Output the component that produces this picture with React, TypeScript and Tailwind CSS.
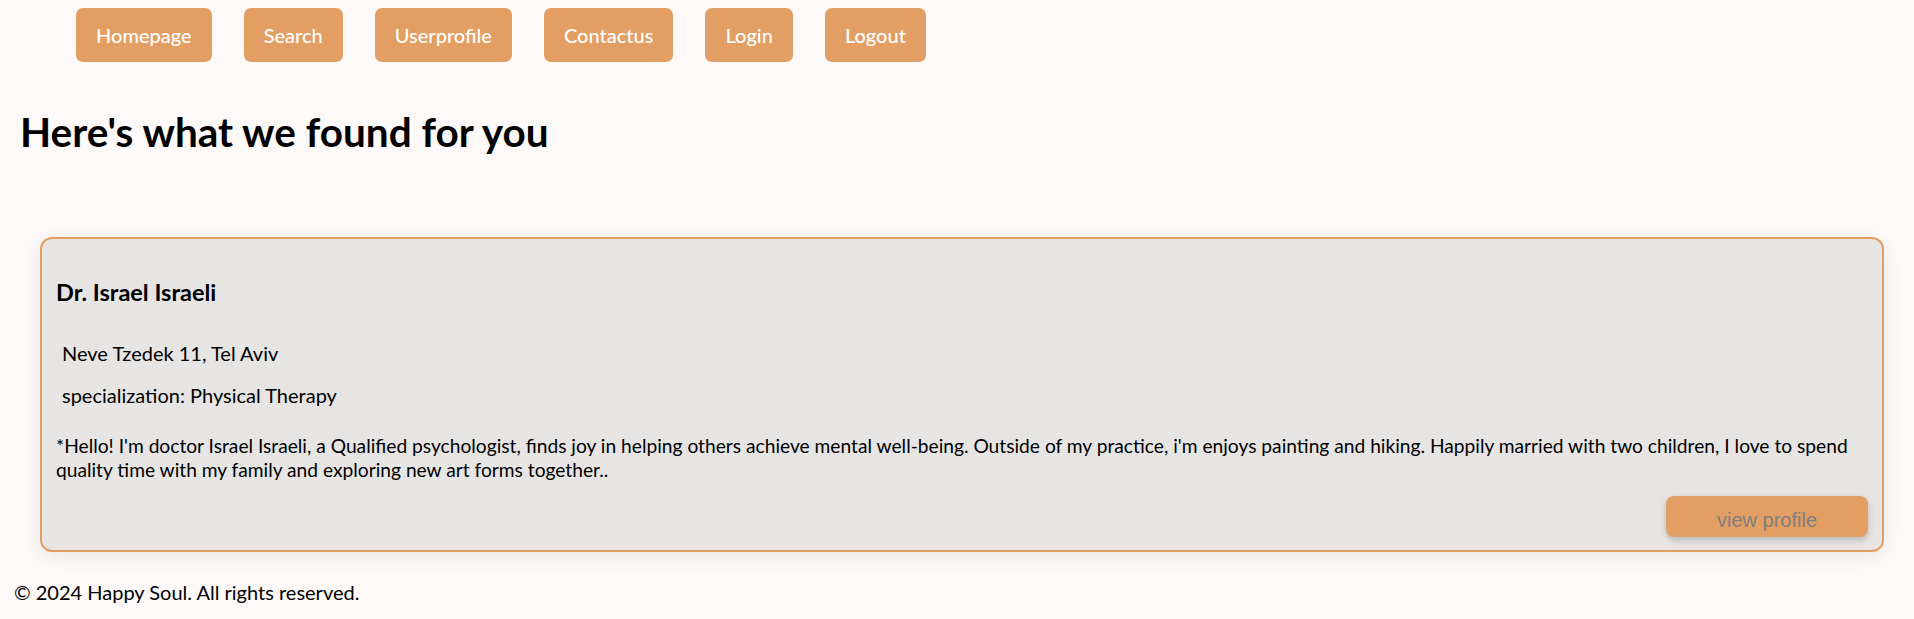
import React from "react";

const navLinks = ["Homepage", "Search", "Userprofile", "Contactus", "Login", "Logout"];

const doctor = {
  name: "Dr. Israel Israeli",
  address: "Neve Tzedek 11, Tel Aviv",
  specialization: "Physical Therapy",
  about:
    "*Hello! I'm doctor Israel Israeli, a Qualified psychologist, finds joy in helping others achieve mental well-being. Outside of my practice, i'm enjoys painting and hiking. Happily married with two children, I love to spend quality time with my family and exploring new art forms together..",
};

const App = () => {
  return (
    <div className="min-h-[619px] w-full bg-[#fdf9f8] text-black font-['Lato','Open_Sans',sans-serif]">
      {/* NAV */}
      <nav className="flex gap-8 pl-[76px] pt-2">
        {navLinks.map((link) => (
          <button
            key={link}
            className="h-[54px] px-5 rounded-[7px] bg-[#e39e63] text-white text-[20px] font-medium"
          >
            {link}
          </button>
        ))}
      </nav>

      <h1 className="mt-[46px] ml-[20px] text-[40.5px] leading-[48px] font-bold">
        Here's what we found for you
      </h1>

      {/* RESULT CARD */}
      <div className="mt-[81px] ml-[40px] mr-[30px] flex flex-col border-2 border-[#e39e63] rounded-[12px] bg-[#e6e5e3] px-[14px] pt-[38px] pb-[13px] shadow-[0_4px_20px_rgba(0,0,0,0.08)]">
        <h3 className="text-[23.5px] leading-[30px] font-bold">{doctor.name}</h3>
        <p className="mt-[34px] pl-[6px] text-[20px] leading-6">{doctor.address}</p>
        <p className="mt-[18px] pl-[6px] text-[20px] leading-6">
          specialization: {doctor.specialization}
        </p>
        <p className="mt-[27px] text-[19.2px] leading-6">{doctor.about}</p>
        <div className="mt-[14px] flex justify-end">
          <button className="w-[202px] h-[41px] rounded-[8px] bg-[#e39e63] pt-[13px] pb-[6px] text-[20px] leading-[22px] text-[#7f7f7f] font-['Liberation_Sans',Arial,sans-serif] shadow-[0_3px_6px_rgba(0,0,0,0.2)]">
            view profile
          </button>
        </div>
      </div>

      <footer className="mt-[28px] pl-[14px] text-[20px] leading-6">
        © 2024 Happy Soul. All rights reserved.
      </footer>
    </div>
  );
};

export default App;
